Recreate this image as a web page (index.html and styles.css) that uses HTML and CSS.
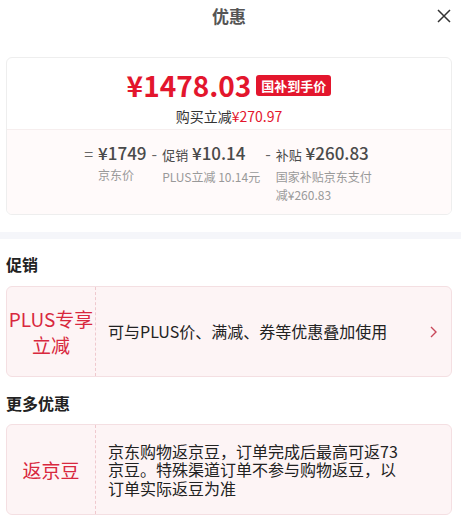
FILE: index.html
```html
<!DOCTYPE html>
<html lang="zh-CN">
<head>
    <meta charset="UTF-8">
    <meta name="viewport" content="width=device-width, initial-scale=1.0">
    <title>优惠</title>
    <link rel="stylesheet" href="styles.css">
</head>
<body>

    <!-- Header -->
    <div class="wrap">
        <div class="header">
            <span></span>
            <h1>优惠</h1>
            <span class="close">
                <svg width="14" height="14" viewBox="0 0 14 14"><path d="M1 1 L13 13 M13 1 L1 13" stroke="#333" stroke-width="1.5" fill="none"/></svg>
            </span>
        </div>

        <!-- Price card -->
        <div class="price-card">
            <div class="price-top">
                <div class="price-row">
                    <span class="price">¥1478.03</span>
                    <span class="badge">国补到手价</span>
                </div>
                <div class="save">购买立减<span class="red">¥270.97</span></div>
            </div>
            <div class="breakdown">
                <div class="item">
                    <span class="op">=</span>
                    <div class="item-body">
                        <div class="value">¥1749</div>
                        <div class="label">京东价</div>
                    </div>
                </div>
                <div class="item">
                    <span class="op">-</span>
                    <div class="item-body">
                        <div class="value"><small>促销</small> ¥10.14</div>
                        <div class="label">PLUS立减 10.14元</div>
                    </div>
                </div>
                <div class="item">
                    <span class="op">-</span>
                    <div class="item-body narrow">
                        <div class="value"><small>补贴</small> ¥260.83</div>
                        <div class="label">国家补贴京东支付减¥260.83</div>
                    </div>
                </div>
            </div>
        </div>
    </div>

    <div class="band"></div>

    <div class="wrap">
        <h2 class="section-title">促销</h2>
        <div class="promo">
            <div class="promo-tag">PLUS专享<br>立减</div>
            <div class="promo-text">可与PLUS价、满减、券等优惠叠加使用</div>
            <span class="arrow">
                <svg width="7" height="12" viewBox="0 0 7 12"><path d="M1 1 L6 6 L1 11" stroke="#c8485a" stroke-width="1.4" fill="none"/></svg>
            </span>
        </div>

        <h2 class="section-title more">更多优惠</h2>
        <div class="promo">
            <div class="promo-tag">返京豆</div>
            <div class="promo-text wide">京东购物返京豆，订单完成后最高可返73京豆。特殊渠道订单不参与购物返豆，以订单实际返豆为准</div>
        </div>
    </div>

</body>
</html>
```

FILE: styles.css
```css
/* Reset */
* {
    margin: 0;
    padding: 0;
    box-sizing: border-box;
}

body {
    font-family: "Noto Sans CJK SC", "Noto Sans", sans-serif;
    background-color: #fff;
    color: #222;
    width: 469px;
}

.wrap {
    padding: 0 17px 0 6px;
}

/* Header */
.header {
    height: 32px;
    display: grid;
    grid-template-columns: 1fr auto 1fr;
    align-items: center;
}

.header h1 {
    font-size: 17px;
    font-weight: bold;
    color: #555;
    line-height: 32px;
}

.close {
    justify-self: end;
    display: flex;
    margin-right: 1px;
}

/* Price card */
.price-card {
    margin-top: 25px;
    border: 1px solid #eee;
    border-radius: 6px;
    overflow: hidden;
}

.price-top {
    height: 71px;
    padding-top: 7px;
    text-align: center;
}

.price-row {
    display: flex;
    justify-content: center;
    align-items: center;
    height: 41px;
}

.price {
    font-size: 28px;
    font-weight: bold;
    color: #e3162d;
    line-height: 41px;
}

.badge {
    background-color: #e3162d;
    color: #fff;
    font-size: 13px;
    font-weight: bold;
    height: 21px;
    line-height: 21px;
    padding: 0 5px;
    border-radius: 3px;
    margin-left: 5px;
}

.save {
    font-size: 14px;
    line-height: 20px;
    color: #333;
}

.red {
    color: #e3162d;
}

.breakdown {
    background-color: #fffafa;
    border-top: 1px solid #f6eeee;
    padding: 10px 0 10px;
    display: flex;
    justify-content: center;
    gap: 5px;
}

.item {
    display: flex;
    gap: 5px;
}

.op {
    font-size: 16px;
    line-height: 26px;
    color: #666;
}

.value {
    font-size: 17px;
    font-weight: 500;
    line-height: 26px;
    color: #4a4a4a;
}

.value small {
    font-size: 13px;
    font-weight: normal;
}

.label {
    font-size: 12px;
    line-height: 18px;
    color: #999;
}

.narrow {
    width: 98px;
}

/* Divider band */
.band {
    height: 7px;
    margin-top: 17px;
    width: 461px;
    background-color: #f5f6fa;
}

/* Sections */
.section-title {
    font-size: 16px;
    font-weight: bold;
    line-height: 22px;
    margin-top: 14px;
    color: #222;
}

.section-title.more {
    margin-top: 15px;
}

.promo {
    margin-top: 11px;
    height: 91px;
    display: flex;
    align-items: center;
    background-color: #fdf4f5;
    border: 1px solid #f4dfe2;
    border-radius: 6px;
}

.more + .promo {
    margin-top: 10px;
}

.promo-tag {
    width: 89px;
    height: 100%;
    flex-shrink: 0;
    display: flex;
    align-items: center;
    justify-content: center;
    text-align: center;
    font-size: 19px;
    line-height: 26px;
    color: #d8283e;
    border-right: 1px dashed #efc9ce;
}

.promo-text {
    flex: 1;
    padding-left: 12px;
    font-size: 16px;
    line-height: 18.5px;
    color: #222;
}

.promo-text.wide {
    flex: none;
    width: 308px;
}

.arrow {
    display: flex;
    margin-right: 14px;
}
```
